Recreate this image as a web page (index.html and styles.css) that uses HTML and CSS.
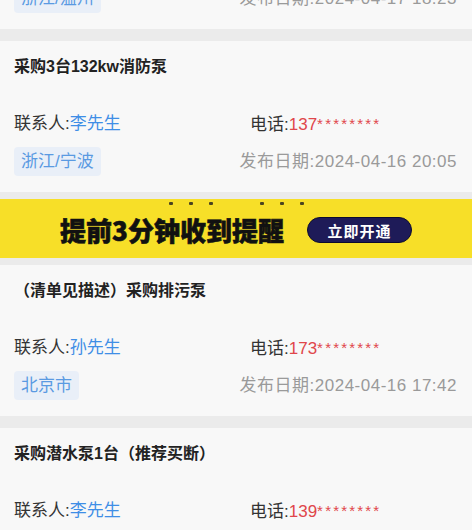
FILE: index.html
```html
<!DOCTYPE html>
<html lang="zh">
<head>
<meta charset="utf-8">
<title>采购信息</title>
<link rel="stylesheet" href="styles.css">
</head>
<body>
<div class="feed">
  <div class="card card-partial">
    <div class="title">采购水泵</div>
    <div class="contact-row">
      <div class="contact">联系人:<span class="name">王先生</span></div>
      <div class="phone">电话:<span class="num">138</span><span class="stars">********</span></div>
    </div>
    <div class="meta-row">
      <span class="tag">浙江/温州</span>
      <span class="date">发布日期:2024-04-17 18:23</span>
    </div>
  </div>

  <div class="card">
    <div class="title">采购3台132kw消防泵</div>
    <div class="contact-row">
      <div class="contact">联系人:<span class="name">李先生</span></div>
      <div class="phone">电话:<span class="num">137</span><span class="stars">********</span></div>
    </div>
    <div class="meta-row">
      <span class="tag">浙江/宁波</span>
      <span class="date">发布日期:2024-04-16 20:05</span>
    </div>
  </div>

  <div class="banner">
    <div class="dots">
      <span class="dot"></span><span class="dot"></span><span class="dot"></span>
      <span class="dot-gap"></span>
      <span class="dot"></span><span class="dot"></span><span class="dot"></span>
    </div>
    <div class="banner-row">
      <span class="banner-text">提前3分钟收到提醒</span>
      <span class="banner-btn">立即开通</span>
    </div>
  </div>

  <div class="card">
    <div class="title">（清单见描述）采购排污泵</div>
    <div class="contact-row">
      <div class="contact">联系人:<span class="name">孙先生</span></div>
      <div class="phone">电话:<span class="num">173</span><span class="stars">********</span></div>
    </div>
    <div class="meta-row">
      <span class="tag">北京市</span>
      <span class="date">发布日期:2024-04-16 17:42</span>
    </div>
  </div>

  <div class="card">
    <div class="title">采购潜水泵1台（推荐买断）</div>
    <div class="contact-row">
      <div class="contact">联系人:<span class="name">李先生</span></div>
      <div class="phone">电话:<span class="num">139</span><span class="stars">********</span></div>
    </div>
    <div class="meta-row">
      <span class="tag">江苏/南京</span>
      <span class="date">发布日期:2024-04-16 16:30</span>
    </div>
  </div>
</div>
</body>
</html>
```

FILE: styles.css
```css
html, body {
  margin: 0;
  padding: 0;
}
body {
  background: #ebebeb;
  font-family: "Liberation Sans", "Noto Sans CJK SC", sans-serif;
  overflow: hidden;
  height: 530px;
}
.feed {
  display: flex;
  flex-direction: column;
}
.card {
  background: #f8f8f8;
  padding: 15px 15px 16px 14px;
}
.card + .card {
  margin-top: 12px;
}
.card-partial {
  margin-top: -122px;
}
.title {
  height: 22px;
  font-size: 16px;
  font-weight: 700;
  line-height: 22px;
  color: #222;
}
.contact-row {
  margin-top: 35px;
  height: 22px;
  display: grid;
  grid-template-columns: 236px 1fr;
  font-size: 17px;
  line-height: 22px;
  color: #333;
}
.name {
  color: #3f8ee6;
}
.num {
  color: #e0464b;
}
.stars {
  color: #e0464b;
  font-size: 15px;
  vertical-align: 1px;
  letter-spacing: 2.2px;
}
.meta-row {
  margin-top: 12px;
  height: 29px;
  display: flex;
  justify-content: space-between;
  align-items: center;
}
.tag {
  height: 29px;
  line-height: 29px;
  padding: 0 7px;
  border-radius: 4px;
  background: #e9eff8;
  color: #5a9ae2;
  font-size: 17px;
}
.date {
  color: #9a9a9a;
  font-size: 17px;
  line-height: 22px;
  letter-spacing: 0.5px;
}
.banner {
  margin: 7px 0;
  background: #f7df28;
  padding: 3px 0 15px;
  display: flex;
  flex-direction: column;
}
.dots {
  display: flex;
  justify-content: center;
  gap: 16px;
  height: 3px;
}
.dot {
  width: 4px;
  height: 3px;
  border-radius: 1px;
  background: #4a4520;
}
.dot-gap {
  width: 15px;
}
.banner-row {
  margin-top: 12px;
  height: 26px;
  display: flex;
  justify-content: center;
  align-items: center;
  gap: 23px;
}
.banner-text {
  font-family: "Noto Sans CJK SC", sans-serif;
  font-size: 26px;
  font-weight: 900;
  color: #111;
  line-height: 26px;
  -webkit-text-stroke: 0.6px #111;
}
.banner-btn {
  font-family: "Noto Sans CJK SC", sans-serif;
  width: 105px;
  height: 26px;
  box-sizing: border-box;
  border-radius: 13px;
  background: #1e1b58;
  border: 1.5px solid #0c0b2e;
  color: #fff;
  font-size: 15px;
  font-weight: 700;
  display: flex;
  align-items: center;
  justify-content: center;
  letter-spacing: 1px;
}
```
